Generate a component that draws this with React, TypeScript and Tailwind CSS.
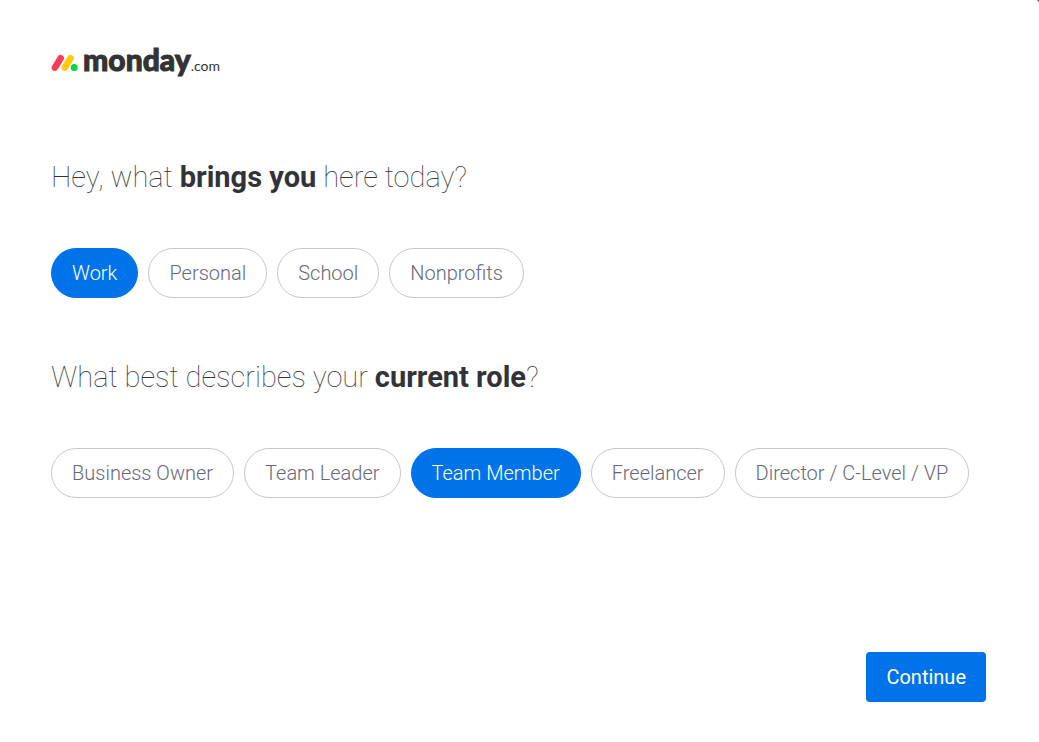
import React, { useState } from "react";
import clsx from "clsx";

interface QuestionProps {
    title: React.ReactNode;
    options: string[];
    value: string;
    onChange: (option: string) => void;
}

const purposes = ["Work", "Personal", "School", "Nonprofits"];
const roles = ["Business Owner", "Team Leader", "Team Member", "Freelancer", "Director / C-Level / VP"];

const Logo = () => (
    <div className="flex h-8 items-center text-[#333333]">
        <svg width="28" height="20" viewBox="0 0 28 20" className="mr-1 shrink-0" aria-hidden="true">
            <path d="M3.9 15.6L9.6 6.2" stroke="#fb3a56" strokeWidth="6.6" strokeLinecap="round" />
            <path d="M13.8 15.6L19.5 6.2" stroke="#ffca00" strokeWidth="6.6" strokeLinecap="round" />
            <circle cx="23.2" cy="15.5" r="3.5" fill="#00d647" />
        </svg>
        <div className="flex items-baseline">
            <span className="font-[Lato,sans-serif] text-[30px] leading-8 font-black [-webkit-text-stroke:1px_#333333]">
                monday
            </span>
            <span className="font-[Lato,sans-serif] text-sm leading-8">.com</span>
        </div>
    </div>
);

const Question = ({ title, options, value, onChange }: QuestionProps) => (
    <section>
        <h2 className="text-[29px] leading-9 font-thin text-[#323338]">{title}</h2>
        <div className="mt-[53px] flex flex-wrap gap-[10px]">
            {options.map((option) => (
                <button
                    key={option}
                    type="button"
                    aria-pressed={option === value}
                    onClick={() => onChange(option)}
                    className={clsx(
                        "h-[50px] rounded-full border px-5 text-xl font-light",
                        option === value
                            ? "border-[#0073ea] bg-[#0073ea] text-white"
                            : "border-[#c5c7d0] bg-white text-[#676879]"
                    )}
                >
                    {option}
                </button>
            ))}
        </div>
    </section>
);

export default function App() {
    const [purpose, setPurpose] = useState("Work");
    const [role, setRole] = useState("Team Member");

    return (
        <div className="min-h-screen bg-[#292f4c] font-[Roboto,sans-serif]">
            <main className="flex min-h-screen flex-col rounded-tr-[3px] bg-white pt-[46px] pr-[53px] pb-10 pl-[51px]">
                <Logo />
                <div className="mt-[81px] mb-10 flex flex-col gap-[61px]">
                    <Question
                        title={<>Hey, what <strong className="font-bold">brings you</strong> here today?</>}
                        options={purposes}
                        value={purpose}
                        onChange={setPurpose}
                    />
                    <Question
                        title={<>What best describes your <strong className="font-bold">current role</strong>?</>}
                        options={roles}
                        value={role}
                        onChange={setRole}
                    />
                </div>
                <button type="button" className="mt-auto h-[50px] self-end rounded bg-[#0073ea] px-5 text-xl text-white">
                    Continue
                </button>
            </main>
        </div>
    );
}
